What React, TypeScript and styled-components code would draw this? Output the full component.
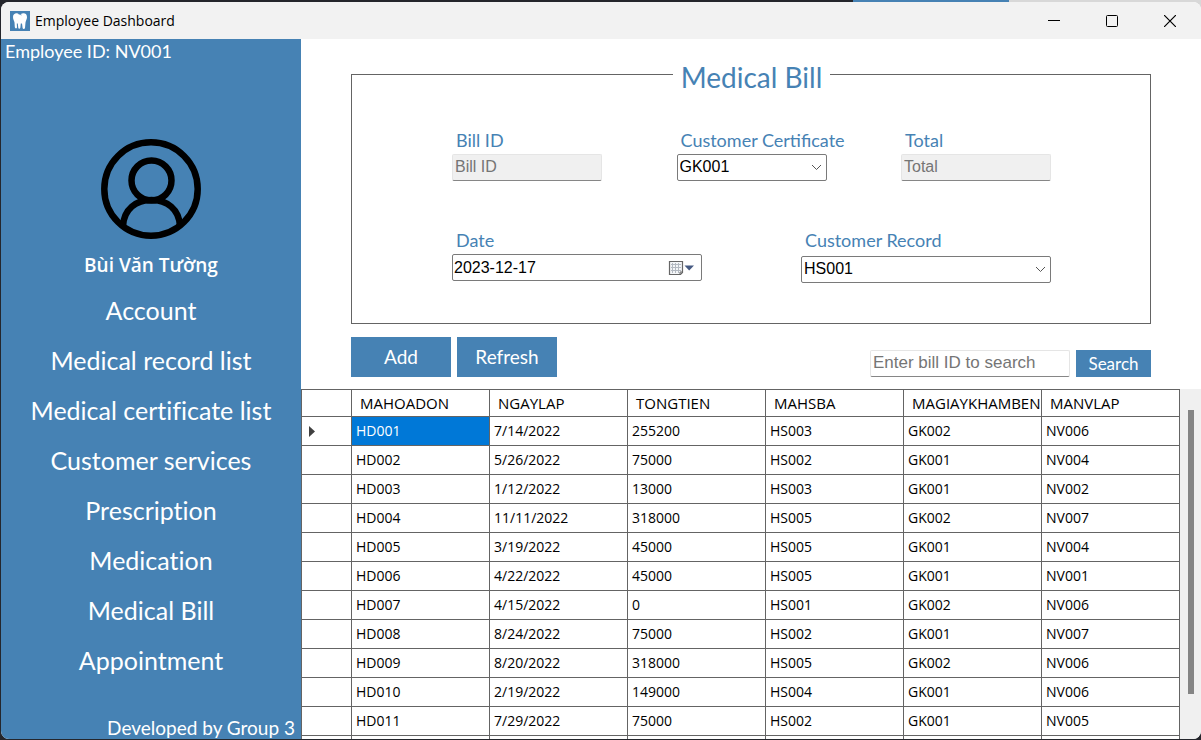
import React from "react";
import styled, { createGlobalStyle } from "styled-components";

const blue = "#4682b4";
const line = "#646464";
const display = `Lato, "Open Sans", sans-serif`;
const ui = `"Open Sans", "Noto Sans", sans-serif`;
const field = `"Liberation Sans", Arial, sans-serif`;

const GlobalStyle = createGlobalStyle`
  * { box-sizing: border-box; }
  body { margin: 0; background: #24262c; font-family: ${ui}; font-variant-ligatures: none; }
  button, input, select { margin: 0; border-radius: 0; }
`;

const Desktop = styled.div`
  height: 100vh;
  display: flex;
  padding: 2px 0 1px 1px;
  background: linear-gradient(90deg, #24262c 71%, ${blue} 71%, ${blue} 84%, #d8d8d8 84%) top / 100% 12px no-repeat #24262c;
`;

const Window = styled.div`
  flex: 1;
  min-width: 0;
  display: flex;
  flex-direction: column;
  background: #fff;
  border-radius: 8px;
  overflow: hidden;
`;

const TitleBar = styled.header`
  flex: none;
  height: 37px;
  display: flex;
  align-items: center;
  background: #f2f2f2;
  padding: 0 2px 0 9px;
`;

const Title = styled.h1`
  flex: 1;
  margin: 0 0 0 5px;
  font: 14px/20px ${ui};
  color: #000;
`;

const WindowButton = styled.button`
  width: 58px;
  height: 37px;
  padding: 0;
  border: 0;
  background: transparent;
  display: grid;
  place-items: center;
`;

const Body = styled.div`
  flex: 1;
  min-height: 0;
  display: flex;
`;

const Sidebar = styled.aside`
  flex: none;
  width: 300px;
  display: flex;
  flex-direction: column;
  align-items: center;
  background: ${blue};
  color: #fff;
  font-family: ${display};
`;

const EmployeeId = styled.p`
  align-self: stretch;
  margin: 0;
  padding-left: 4px;
  font-size: 18px;
  line-height: 24px;
`;

const Avatar = styled.svg`
  flex: none;
  margin-top: 76px;
`;

const UserName = styled.p`
  margin: 12px 0 6px;
  font: 600 19px/28px ${ui};
`;

const Nav = styled.nav`
  display: flex;
  flex-direction: column;
  align-self: stretch;
`;

const NavLink = styled.a`
  height: 50px;
  color: #fff;
  text-align: center;
  text-decoration: none;
  font-size: 25px;
  line-height: 50px;
`;

const Credit = styled.p`
  align-self: flex-end;
  margin: auto 6px 0 0;
  font-size: 19px;
  line-height: 22px;
`;

const Main = styled.main`
  flex: 1;
  min-width: 0;
  display: flex;
  flex-direction: column;
`;

const BillForm = styled.fieldset`
  flex: none;
  min-width: 0;
  height: 269px;
  margin: 16px 50px 0;
  padding: 35px 99px 0 100px;
  border: 1px solid ${line};
`;

const Legend = styled.legend`
  margin: 0 auto;
  padding: 6px 8px 0;
  color: ${blue};
  font: 28px/32px ${display};
`;

const FieldRow = styled.div`
  display: flex;
  justify-content: space-between;
  height: 100px;
`;

const Field = styled.div<{ $wide?: boolean; $gap?: number }>`
  width: ${(p) => (p.$wide ? 250 : 150)}px;
  display: flex;
  flex-direction: column;
  gap: ${(p) => p.$gap ?? 2}px;
`;

const Label = styled.label`
  padding-left: 4px;
  color: ${blue};
  white-space: nowrap;
  font: 18px/24px ${display};
`;

const TextInput = styled.input`
  width: 100%;
  height: 27px;
  padding: 0 2px 2px;
  border: 1px solid #e5e5e5;
  border-bottom-color: #868686;
  border-radius: 2px;
  background: #fff;
  font: 16px ${field};
  &::placeholder { color: #757575; opacity: 1; }
  &:disabled { background: #f0f0f0; }
`;

const SearchInput = styled(TextInput)`
  flex: 1;
  min-width: 0;
  font-size: 17px;
`;

const SelectBox = styled.div`
  position: relative;
`;

const Select = styled.select`
  appearance: none;
  width: 100%;
  height: 27px;
  padding: 0 24px 2px 2px;
  border: 1px solid #7a7a7a;
  border-radius: 2px;
  background: #fff;
  color: #000;
  font: 16px ${field};
`;

const Chevron = styled.svg`
  position: absolute;
  right: 5px;
  top: 10px;
  pointer-events: none;
`;

const DateBox = styled.div`
  display: flex;
  height: 27px;
  border: 1px solid #7a7a7a;
  border-radius: 2px;
`;

const DateInput = styled.input`
  flex: 1;
  min-width: 0;
  padding: 0 1px;
  border: 0;
  background: transparent;
  color: #000;
  font: 16px ${field};
`;

const DateButton = styled.button`
  width: 33px;
  padding: 0;
  border: 0;
  background: transparent;
  display: flex;
  align-items: center;
`;

const Toolbar = styled.div`
  flex: none;
  display: flex;
  align-items: flex-start;
  gap: 6px;
  height: 65px;
  margin: 0 50px;
  padding-top: 13px;
`;

const Action = styled.button<{ $small?: boolean }>`
  flex: none;
  width: ${(p) => (p.$small ? 75 : 100)}px;
  height: ${(p) => (p.$small ? 27 : 40)}px;
  padding: 0;
  border: 0;
  background: ${blue};
  color: #fff;
  font: ${(p) => (p.$small ? 17 : 19)}px/24px ${display};
`;

const SearchForm = styled.form`
  display: flex;
  gap: 6px;
  width: 281px;
  margin: 13px 0 0 auto;
`;

const GridArea = styled.div`
  flex: 1;
  min-height: 0;
  display: flex;
  overflow: hidden;
`;

const GridScroll = styled.div`
  flex: 1;
  min-width: 0;
  overflow: hidden;
`;

const Grid = styled.table`
  width: 100%;
  border-collapse: collapse;
  table-layout: fixed;
  font: 14px/20px ${ui};
  color: #000;
`;

const HeadCell = styled.th`
  height: 27px;
  padding: 0 0 0 8px;
  border: 1px solid ${line};
  text-align: left;
  font-size: 15px;
  font-weight: 400;
  white-space: nowrap;
  overflow: hidden;
`;

const Cell = styled.td<{ $selected?: boolean }>`
  height: 29px;
  padding: 0 0 0 4px;
  border: 1px solid ${line};
  background: ${(p) => (p.$selected ? "#0078d7" : "#fff")};
  color: ${(p) => (p.$selected ? "#fff" : "#000")};
`;

const Marker = styled.svg`
  display: block;
  margin-left: 2px;
`;

const ScrollTrack = styled.div`
  flex: none;
  width: 21px;
  padding: 21px 7px 45px 8px;
  background: #f0f0f0;
`;

const ScrollThumb = styled.div`
  height: 100%;
  background: #858585;
`;

const links = [
  "Account",
  "Medical record list",
  "Medical certificate list",
  "Customer services",
  "Prescription",
  "Medication",
  "Medical Bill",
  "Appointment",
];

const columns = ["MAHOADON", "NGAYLAP", "TONGTIEN", "MAHSBA", "MAGIAYKHAMBENH", "MANVLAP"];

const bills = [
  ["HD001", "7/14/2022", "255200", "HS003", "GK002", "NV006"],
  ["HD002", "5/26/2022", "75000", "HS002", "GK001", "NV004"],
  ["HD003", "1/12/2022", "13000", "HS003", "GK001", "NV002"],
  ["HD004", "11/11/2022", "318000", "HS005", "GK002", "NV007"],
  ["HD005", "3/19/2022", "45000", "HS005", "GK001", "NV004"],
  ["HD006", "4/22/2022", "45000", "HS005", "GK001", "NV001"],
  ["HD007", "4/15/2022", "0", "HS001", "GK002", "NV006"],
  ["HD008", "8/24/2022", "75000", "HS002", "GK001", "NV007"],
  ["HD009", "8/20/2022", "318000", "HS005", "GK002", "NV006"],
  ["HD010", "2/19/2022", "149000", "HS004", "GK001", "NV006"],
  ["HD011", "7/29/2022", "75000", "HS002", "GK001", "NV005"],
  ["", "", "", "", "", ""],
];

function Dropdown({ id, value }: { id: string; value: string }) {
  return (
    <SelectBox>
      <Select id={id} defaultValue={value}>
        <option>{value}</option>
      </Select>
      <Chevron width="11" height="7" viewBox="0 0 11 7" aria-hidden="true">
        <path d="M1 1l4.5 4.5L10 1" fill="none" stroke="#555" />
      </Chevron>
    </SelectBox>
  );
}

export default function App() {
  return (
    <>
      <GlobalStyle />
      <Desktop>
        <Window>
          <TitleBar>
            <svg width="20" height="20" viewBox="0 0 20 20" aria-hidden="true">
              <rect width="20" height="20" fill={blue} />
              <path
                d="M3 6C3 3 5 2 7 2.200L10 3.200L13 2.200C15.500 2 17.200 3.500 17 6.500C16.900 8.500 15.800 9.500 15.500 11.500L15 17C14.700 18.300 12.800 18.300 12.600 17L12 12.500H10.800L10.300 17C10 18 8.500 18 8.300 17L7.800 12.500H6.800L7 16.500C6.500 18 5 17.500 4.800 16L4.500 11.500C4.200 9.500 3 8.500 3 6Z"
                fill="#fff"
              />
              <path d="M8 2.500L11.500 4" stroke={blue} strokeWidth=".8" />
            </svg>
            <Title>Employee Dashboard</Title>
            <WindowButton aria-label="Minimize">
              <svg width="12" height="12" viewBox="0 0 12 12"><path d="M0 5.500h12" stroke="#000" /></svg>
            </WindowButton>
            <WindowButton aria-label="Maximize">
              <svg width="12" height="12" viewBox="0 0 12 12"><rect x=".5" y=".5" width="11" height="11" rx="1" fill="none" stroke="#000" /></svg>
            </WindowButton>
            <WindowButton aria-label="Close">
              <svg width="12" height="12" viewBox="0 0 12 12"><path d="M0 0l12 12M12 0L0 12" stroke="#000" strokeWidth="1.200" /></svg>
            </WindowButton>
          </TitleBar>
          <Body>
            <Sidebar>
              <EmployeeId>Employee ID: NV001</EmployeeId>
              <Avatar width="100" height="100" viewBox="0 0 100 100" fill="none" stroke="#000" strokeWidth="6.500" aria-hidden="true">
                <circle cx="50" cy="50" r="46.700" />
                <circle cx="50.500" cy="41.500" r="20" />
                <path d="M22 87C23 70 35 61 50.500 61S78 70 79 87" />
              </Avatar>
              <UserName>Bùi Văn Tường</UserName>
              <Nav>
                {links.map((l) => (
                  <NavLink key={l} href="#">{l}</NavLink>
                ))}
              </Nav>
              <Credit>Developed by Group 3</Credit>
            </Sidebar>
            <Main>
              <BillForm>
                <Legend>Medical Bill</Legend>
                <FieldRow>
                  <Field>
                    <Label htmlFor="bill">Bill ID</Label>
                    <TextInput id="bill" placeholder="Bill ID" disabled />
                  </Field>
                  <Field>
                    <Label htmlFor="certificate">Customer Certificate</Label>
                    <Dropdown id="certificate" value="GK001" />
                  </Field>
                  <Field>
                    <Label htmlFor="total">Total</Label>
                    <TextInput id="total" placeholder="Total" disabled />
                  </Field>
                </FieldRow>
                <FieldRow>
                  <Field $wide>
                    <Label htmlFor="date">Date</Label>
                    <DateBox>
                      <DateInput id="date" defaultValue="2023-12-17" />
                      <DateButton type="button" aria-label="Open calendar">
                        <svg width="26" height="16" viewBox="0 0 26 16">
                          <path d="M1.500 1.500h13v11l-2 2h-11z" fill="#f4f6f8" stroke="#666" strokeWidth="1.200" />
                          <path d="M3 4.500h10M3 7.500h10M3 10.500h10M4.500 3v10M7.500 3v10M10.500 3v10" stroke="#b4bac2" />
                          <path d="M14.500 12h-2.500v2.500" fill="none" stroke="#666" />
                          <path d="M16.500 5.500h9.500L21.200 10.500z" fill="#465a82" />
                        </svg>
                      </DateButton>
                    </DateBox>
                  </Field>
                  <Field $wide $gap={4}>
                    <Label htmlFor="record">Customer Record</Label>
                    <Dropdown id="record" value="HS001" />
                  </Field>
                </FieldRow>
              </BillForm>
              <Toolbar>
                <Action type="button">Add</Action>
                <Action type="button">Refresh</Action>
                <SearchForm onSubmit={(e) => e.preventDefault()}>
                  <SearchInput aria-label="Search bill" placeholder="Enter bill ID to search" />
                  <Action $small type="submit">Search</Action>
                </SearchForm>
              </Toolbar>
              <GridArea>
                <GridScroll>
                  <Grid>
                    <colgroup>
                      <col width="50" />
                      {columns.map((c) => <col key={c} />)}
                    </colgroup>
                    <thead>
                      <tr>
                        <HeadCell aria-label="Current row" />
                        {columns.map((c) => <HeadCell key={c} scope="col">{c}</HeadCell>)}
                      </tr>
                    </thead>
                    <tbody>
                      {bills.map((row, r) => (
                        <tr key={r}>
                          <Cell>
                            {r === 0 && (
                              <Marker width="7" height="11" viewBox="0 0 7 11" aria-hidden="true">
                                <path d="M1 0l6 5.500L1 11z" fill="#404040" />
                              </Marker>
                            )}
                          </Cell>
                          {row.map((v, c) => (
                            <Cell key={c} $selected={r === 0 && c === 0}>{v}</Cell>
                          ))}
                        </tr>
                      ))}
                    </tbody>
                  </Grid>
                </GridScroll>
                <ScrollTrack>
                  <ScrollThumb />
                </ScrollTrack>
              </GridArea>
            </Main>
          </Body>
        </Window>
      </Desktop>
    </>
  );
}
